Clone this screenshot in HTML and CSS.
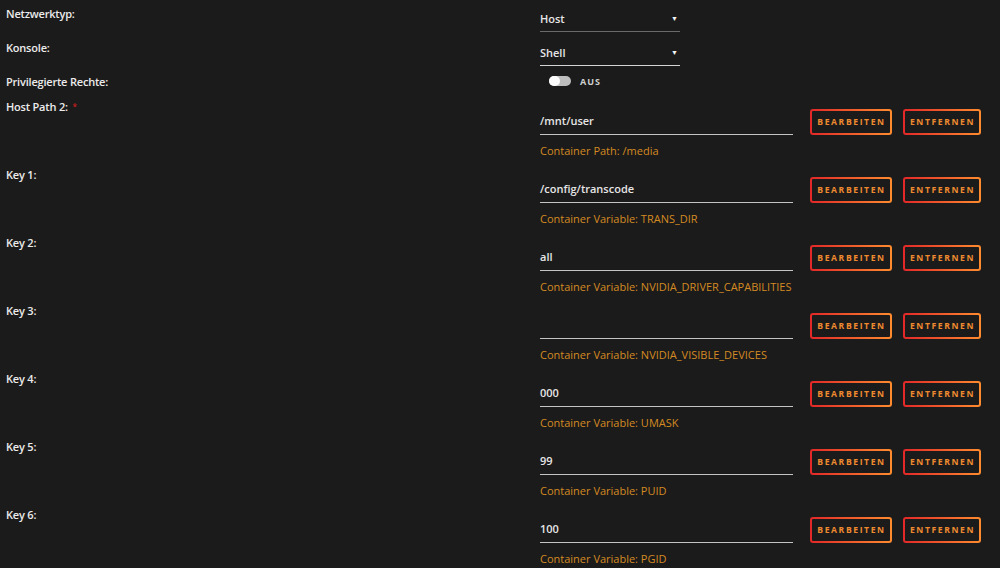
FILE: index.html
```html
<!DOCTYPE html>
<html lang="de">
<head>
  <meta charset="UTF-8" />
  <title>Container bearbeiten</title>
  <link rel="stylesheet" href="styles.css">
</head>
<body>
  <div class="form">
    <!-- Simple settings -->
    <div class="row row-simple">
      <div class="label">Netzwerktyp:</div>
      <div class="select select-dim"><span>Host</span><span class="arrow">&#9660;</span></div>
    </div>
    <div class="row row-simple">
      <div class="label">Konsole:</div>
      <div class="select"><span>Shell</span><span class="arrow">&#9660;</span></div>
    </div>
    <div class="row row-toggle">
      <div class="label">Privilegierte Rechte:</div>
      <div class="toggle-wrap">
        <span class="toggle"><span class="knob"></span></span>
        <span class="toggle-text">AUS</span>
      </div>
    </div>

    <!-- Paths and variables -->
    <div class="row row-path">
      <div class="label">Host Path 2: <span class="req">*</span></div>
      <div class="field">
        <div class="input">/mnt/user</div>
        <div class="hint">Container Path: /media</div>
      </div>
      <div class="actions">
        <button class="btn btn-edit">BEARBEITEN</button>
        <button class="btn btn-remove">ENTFERNEN</button>
      </div>
    </div>
    <div class="row row-path">
      <div class="label">Key 1:</div>
      <div class="field">
        <div class="input">/config/transcode</div>
        <div class="hint">Container Variable: TRANS_DIR</div>
      </div>
      <div class="actions">
        <button class="btn btn-edit">BEARBEITEN</button>
        <button class="btn btn-remove">ENTFERNEN</button>
      </div>
    </div>
    <div class="row row-path">
      <div class="label">Key 2:</div>
      <div class="field">
        <div class="input">all</div>
        <div class="hint">Container Variable: NVIDIA_DRIVER_CAPABILITIES</div>
      </div>
      <div class="actions">
        <button class="btn btn-edit">BEARBEITEN</button>
        <button class="btn btn-remove">ENTFERNEN</button>
      </div>
    </div>
    <div class="row row-path">
      <div class="label">Key 3:</div>
      <div class="field">
        <div class="input"></div>
        <div class="hint">Container Variable: NVIDIA_VISIBLE_DEVICES</div>
      </div>
      <div class="actions">
        <button class="btn btn-edit">BEARBEITEN</button>
        <button class="btn btn-remove">ENTFERNEN</button>
      </div>
    </div>
    <div class="row row-path">
      <div class="label">Key 4:</div>
      <div class="field">
        <div class="input">000</div>
        <div class="hint">Container Variable: UMASK</div>
      </div>
      <div class="actions">
        <button class="btn btn-edit">BEARBEITEN</button>
        <button class="btn btn-remove">ENTFERNEN</button>
      </div>
    </div>
    <div class="row row-path">
      <div class="label">Key 5:</div>
      <div class="field">
        <div class="input">99</div>
        <div class="hint">Container Variable: PUID</div>
      </div>
      <div class="actions">
        <button class="btn btn-edit">BEARBEITEN</button>
        <button class="btn btn-remove">ENTFERNEN</button>
      </div>
    </div>
    <div class="row row-path">
      <div class="label">Key 6:</div>
      <div class="field">
        <div class="input">100</div>
        <div class="hint">Container Variable: PGID</div>
      </div>
      <div class="actions">
        <button class="btn btn-edit">BEARBEITEN</button>
        <button class="btn btn-remove">ENTFERNEN</button>
      </div>
    </div>
  </div>
</body>
</html>
```

FILE: styles.css
```css
/* Base */
html, body {
  background-color: #1c1b1b;
}
body {
  margin: 0;
  padding: 0 0 0 6px;
  font-family: 'Open Sans', 'Noto Sans', sans-serif;
  font-size: 11px;
  color: #e6e6e6;
  overflow: hidden;
}
.form {
  display: flex;
  flex-direction: column;
}
.row {
  display: flex;
  align-items: flex-start;
}
.label {
  width: 534px;
  flex: none;
  line-height: 14px;
  font-weight: 600;
  letter-spacing: -0.2px;
  color: #ececec;
}
.req {
  color: #c81e1e;
  font-size: 8px;
  vertical-align: top;
  margin-left: 2px;
}
/* Dropdown rows */
.row-simple {
  height: 34px;
}
.row-simple .label {
  padding-top: 7px;
}
.select {
  width: 140px;
  margin-top: 12px;
  display: flex;
  justify-content: space-between;
  line-height: 14px;
  padding-bottom: 5px;
  border-bottom: 1px solid #d4d4d4;
  font-weight: 600;
  color: #e6e6e6;
}
.select-dim {
  border-bottom-color: #6a6a6a;
}
.arrow {
  font-size: 7px;
  padding-right: 2px;
  color: #f4f4f4;
}
/* Toggle row */
.row-toggle {
  height: 28px;
}
.row-toggle .label {
  padding-top: 7px;
}
.toggle-wrap {
  display: flex;
  align-items: center;
  gap: 9px;
  margin: 8px 0 0 9px;
  height: 10px;
}
.toggle {
  display: flex;
  width: 22px;
  height: 10px;
  border-radius: 5px;
  background: #bdbdbd;
}
.knob {
  width: 11px;
  height: 10px;
  border-radius: 5px;
  background: #fafafa;
}
.toggle-text {
  font-size: 9px;
  font-weight: 700;
  letter-spacing: 1px;
  color: #d0d0d0;
}
/* Path and variable rows */
.row-path {
  height: 68px;
}
.row-path .label {
  padding-top: 4px;
}
.field {
  width: 253px;
  margin-top: 18px;
}
.input {
  height: 14px;
  line-height: 14px;
  padding-bottom: 6px;
  border-bottom: 1px solid #c4c4c4;
  font-weight: 600;
  color: #e6e6e6;
}
.hint {
  margin-top: 9px;
  line-height: 14px;
  color: #d38a22;
}
.actions {
  display: flex;
  gap: 11px;
  margin: 13px 0 0 17px;
}
.btn {
  height: 26px;
  padding: 0 0 0 1px;
  border: 2px solid transparent;
  border-radius: 3px;
  background:
    linear-gradient(#1c1b1b, #1c1b1b) padding-box,
    linear-gradient(90deg, #e22828, #ff8c2f) border-box;
  font-family: 'Open Sans', sans-serif;
  font-size: 8.6px;
  font-weight: 700;
  letter-spacing: 1.6px;
  color: #ee8a30;
  cursor: pointer;
}
.btn-edit {
  width: 82px;
}
.btn-remove {
  width: 78px;
}
```
